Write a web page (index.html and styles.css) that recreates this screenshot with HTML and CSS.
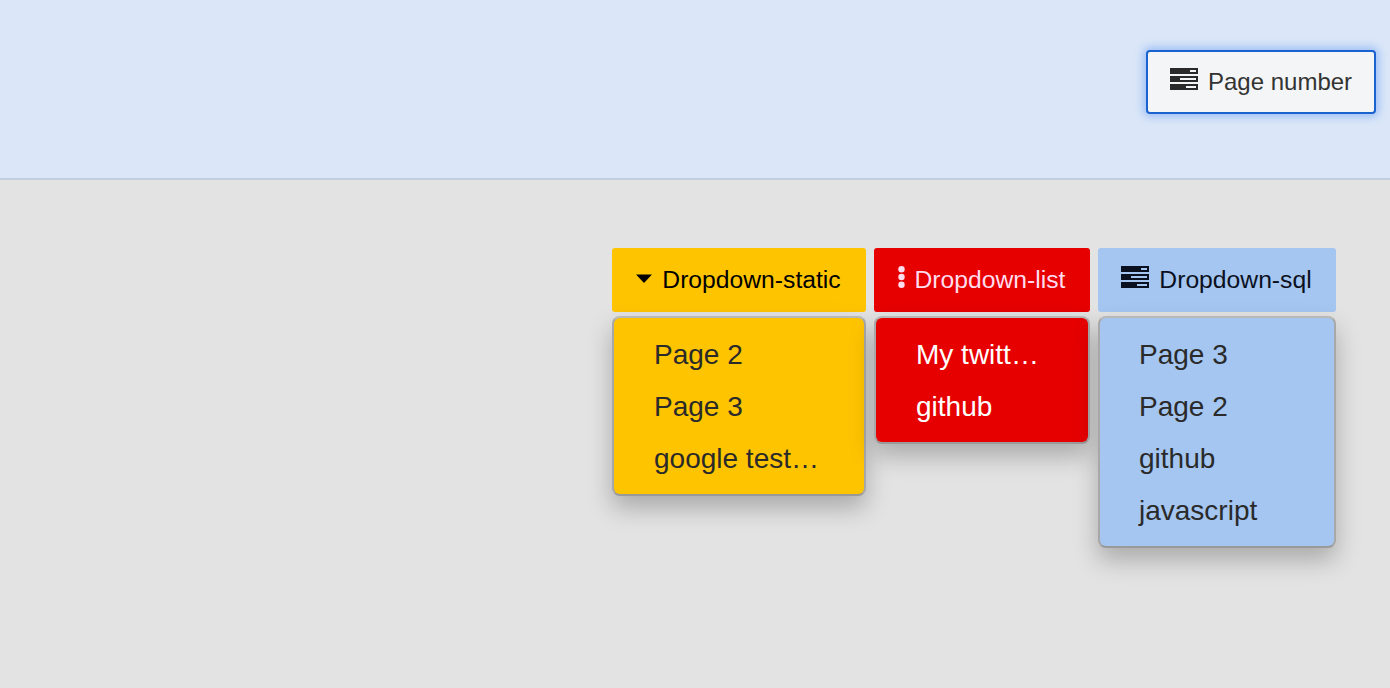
FILE: index.html
```html
<!DOCTYPE html>
<html lang="en">
<head>
<meta charset="utf-8">
<title>Dropdowns</title>
<link rel="stylesheet" href="styles.css">
</head>
<body>
<header class="top">
  <button class="btn btn-page"><svg class="ic-sql" viewBox="0 0 28 22"><path d="M0 0h28v6H0zM0 8h28v6H0zM0 16h28v6H0z" fill="#2a2a2a"/><path d="M20 2h6v2h-6zM10 10h16v2H10zM16 18h10v2H16z" fill="#f3f5f6"/></svg><span>Page number</span></button>
</header>
<main class="region">
  <div class="col col-a">
    <button class="btn-dd dd-yellow"><svg class="ic-caret" viewBox="0 0 16 9"><path d="M0 .5h16L8 9z" fill="#000"/></svg><span>Dropdown-static</span></button>
    <ul class="menu dd-yellow"><li>Page 2</li><li>Page 3</li><li>google test…</li></ul>
  </div>
  <div class="col col-b">
    <button class="btn-dd dd-red"><svg class="ic-dots" viewBox="0 0 7 22"><circle cx="3.500" cy="3.200" r="3.200" fill="#fde"/><circle cx="3.500" cy="11" r="3.200" fill="#fde"/><circle cx="3.500" cy="18.800" r="3.200" fill="#fde"/></svg><span>Dropdown-list</span></button>
    <ul class="menu dd-red"><li>My twitt…</li><li>github</li></ul>
  </div>
  <div class="col col-c">
    <button class="btn-dd dd-blue"><svg class="ic-sql" viewBox="0 0 28 22"><path d="M0 0h28v6H0zM0 8h28v6H0zM0 16h28v6H0z" fill="#0b1020"/><path d="M20 2h6v2h-6zM10 10h16v2H10zM16 18h10v2H16z" fill="#a4c6f0"/></svg><span>Dropdown-sql</span></button>
    <ul class="menu dd-blue"><li>Page 3</li><li>Page 2</li><li>github</li><li>javascript</li></ul>
  </div>
</main>
</body>
</html>
```
FILE: styles.css
```css
* { box-sizing: border-box; }
html, body { margin: 0; height: 100%; }
body {
  background: #e3e3e3;
  overflow: hidden;
  font-family: "Liberation Sans", sans-serif;
}
.top {
  height: 180px;
  background: #dbe7f8;
  border-bottom: 2px solid #c3cfe0;
  display: flex;
  justify-content: flex-end;
  align-items: flex-start;
  padding: 50px 14px 0 0;
}
.btn {
  width: 230px;
  height: 64px;
  display: flex;
  align-items: center;
  padding: 0 0 0 22px;
  background: #f3f5f6;
  color: #333;
  border: 2px solid #1a62d0;
  border-radius: 4px;
  box-shadow: 0 0 8px 3px rgba(66, 133, 244, 0.4);
  font: 24px "Liberation Sans", sans-serif;
}
.ic-sql { width: 28px; height: 22px; margin: -6px 10px 0 0; flex: none; }
.region {
  display: flex;
  justify-content: flex-end;
  align-items: flex-start;
  gap: 8px;
  padding: 68px 54px 0 0;
}
.col { display: flex; flex-direction: column; }
.col-a { width: 254px; }
.col-b { width: 216px; }
.col-c { width: 238px; }
.btn-dd {
  height: 64px;
  display: flex;
  align-items: center;
  justify-content: center;
  gap: 10px;
  border: 0;
  border-radius: 3px;
  font: 24.7px "Liberation Sans", sans-serif;
  padding: 0 1px 0 0;
}
.btn-dd .ic-sql { margin-right: 0; }
.dd-yellow { background: #ffc400; color: #000; }
.dd-red { background: #e60000; color: #fde; }
.dd-blue { background: #a4c6f0; color: #0b1020; }
.ic-caret { width: 16px; height: 9px; margin-top: -3px; }
.ic-dots { width: 7px; height: 22px; margin-top: -6px; }
.menu {
  list-style: none;
  margin: 4px 0 0;
  padding: 11px 0 9px;
  border: 2px solid;
  border-color: #b8b8b8 #a8a8a8 #9a9a9a;
  border-radius: 8px;
  box-shadow: 0 12px 24px rgba(0, 0, 0, 0.25);
  font-size: 28px;
}
.menu li { height: 52px; line-height: 52px; padding-left: 40px; color: #2a2a2a; }
.menu.dd-red li { color: #fff; }
.menu.dd-blue li { padding-left: 39px; }
```
